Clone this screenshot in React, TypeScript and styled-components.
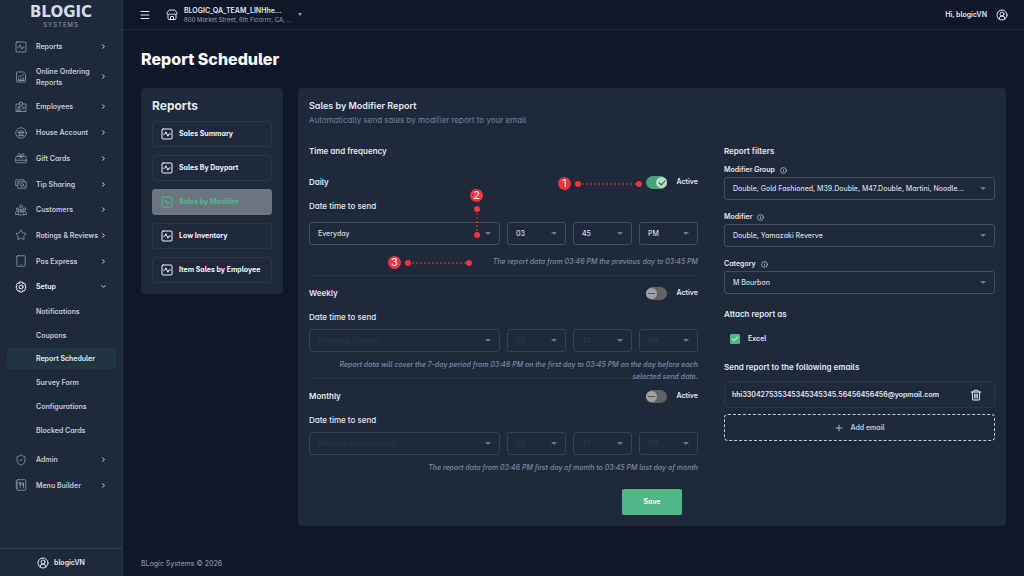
import React from "react";
import styled, { createGlobalStyle, css } from "styled-components";
import {
  Check,
  ChevronDown,
  ChevronRight,
  CircleUserRound,
  Info,
  Menu,
  Plus,
  ShieldCheck,
  Star,
  Store,
} from "lucide-react";

const c = {
  page: "#0f172a",
  panel: "#1e293b",
  line: "#2a3648",
  field: "#414e60",
  text: "#e2e8f0",
  soft: "#c3cad5",
  muted: "#73839b",
  green: "#52b788",
  red: "#fa3239",
};

const GlobalStyle = createGlobalStyle`
  *, *::before, *::after { box-sizing: border-box; }
  body {
    margin: 0;
    background: ${c.page};
    color: ${c.text};
    font-family: Inter, "Liberation Sans", sans-serif;
    font-size: 8px;
    line-height: 12px;
    font-weight: 500;
    font-feature-settings: "cv11", "cv05";
  }
  button, input, select { font: inherit; font-feature-settings: inherit; color: inherit; }
  button { cursor: pointer; }
  a { color: inherit; text-decoration: none; }
  h1, h2, h3, p, ul { margin: 0; padding: 0; }
  ul { list-style: none; }
  svg { display: block; flex: none; }
`;

/* ---------- icons ---------- */

const Icon = ({ size = 12, stroke = 1.5, children }: { size?: number; stroke?: number; children: React.ReactNode }) => (
  <svg
    width={size}
    height={size}
    viewBox="0 0 24 24"
    fill="none"
    stroke="currentColor"
    strokeWidth={stroke}
    strokeLinecap="round"
    strokeLinejoin="round"
    aria-hidden="true"
  >
    {children}
  </svg>
);

const PulseIcon = ({ stroke = 1.5 }: { stroke?: number }) => (
  <Icon stroke={stroke}>
    <rect x="2" y="2" width="20" height="20" rx="2" />
    <path d="M5.5 12.5h2l2.3-5 4 9 2.2-4.5h2.5" />
  </Icon>
);
const OrderReportIcon = () => (
  <Icon>
    <path d="M16 2H4.500A1.500 1.500 0 0 0 3 3.500v17A1.500 1.500 0 0 0 4.500 22h15a1.500 1.500 0 0 0 1.500-1.500V7z" />
    <path d="M6.500 12.500 10 9l2.500 2L17 7M7 19v-3M10.500 19v-4M14 19v-4M17.500 19v-6M7 19h10.500" />
  </Icon>
);
const BadgeIcon = () => (
  <Icon>
    <path d="M9 6H2v15h20V6h-7" />
    <rect x="9" y="2.500" width="6" height="6" rx="1" />
    <circle cx="8" cy="12" r="1.800" />
    <path d="M4.800 18c0-4 6.400-4 6.400 0zM14.500 12H19M14.500 15.500H19" />
  </Icon>
);
const BankIcon = () => (
  <Icon>
    <circle cx="12" cy="12" r="10.500" />
    <path d="M6 10.500 12 6.500l6 4zM6.500 17.500h11M8.500 11v6M12 11v6M15.500 11v6" />
  </Icon>
);
const GiftIcon = () => (
  <Icon>
    <rect x="1.500" y="9" width="21" height="12.500" rx="1.500" />
    <path d="M1.500 16.500h21M12 9C9 9 6 7.500 6 5.200 6 2 11 2 12 9c1-7 6-7 6-3.800C18 7.500 15 9 12 9zM12 9l-3 4M12 9l3 4" />
  </Icon>
);
const CashIcon = () => (
  <Icon>
    <path d="M5 15H1.500V3.500H18V7" />
    <rect x="5.500" y="7.500" width="17" height="13" rx="1" />
    <circle cx="14" cy="14" r="3" />
    <path d="M8.500 10.500v1M19.500 16.500v1" />
  </Icon>
);
const GroupIcon = () => (
  <Icon>
    <circle cx="12" cy="5" r="3" />
    <circle cx="5" cy="10" r="2.300" />
    <circle cx="19" cy="10" r="2.300" />
    <path d="M6.500 21v-4.500C6.500 9 17.500 9 17.500 16.500V21zM6 14c-3-.5-4.800 1-4.800 3.500V21h5.300M18 14c3-.5 4.800 1 4.800 3.500V21h-5.300" />
    <circle cx="12" cy="15" r="2" />
  </Icon>
);
const TabletIcon = () => (
  <Icon>
    <rect x="3.500" y="1.500" width="17" height="21" rx="2" />
    <path d="M11.500 19h1" />
  </Icon>
);
const GearIcon = () => (
  <Icon stroke={2}>
    <path d="M9.500 2h5l.8 2.700 2.700-.7 3 3.500-1.300 2.500 2.300 1.500v1.500l-2.300 1.500L21 17l-3 3-2.700-.7-.8 2.700h-5l-.8-2.700L6 20l-3-3 1.300-2.500L2 13v-1.500L4.300 10 3 7l3-3 2.700.7z" />
    <circle cx="12" cy="12" r="4" />
  </Icon>
);
const MenuBookIcon = () => (
  <Icon>
    <rect x="3.500" y="1.500" width="18" height="21" rx="2" />
    <path d="M2 6h3M2 10h3M2 14h3M2 18h3M8.500 7v3c0 2.500 4 2.500 4 0V7M10.500 7v11M17 18V7c-2 1-2.500 4-1.500 6H17" />
  </Icon>
);
const TrashIcon = () => (
  <Icon stroke={2}>
    <path d="M2.500 6h19M8 6V2.500h8V6M4.500 6l1 16h13l1-16M9.500 10v8M12 10v8M14.500 10v8" />
  </Icon>
);

/* ---------- shell ---------- */

const Shell = styled.div`
  display: flex;
  min-height: 100vh;
`;

const Sidebar = styled.aside`
  display: flex;
  flex-direction: column;
  flex: 0 0 123px;
  min-width: 0;
  background: ${c.panel};
  border-right: 1px solid ${c.line};
`;

const Brand = styled.div`
  display: flex;
  flex-direction: column;
  align-items: center;
  height: 34px;
  padding-top: 4px;
  color: #d5dae1;
`;
const BrandName = styled.span`
  font: bold 15px/17px "DejaVu Sans", sans-serif;
`;
const BrandSub = styled.span`
  font-size: 6px;
  line-height: 8px;
  font-weight: 400;
  letter-spacing: 1px;
  color: #94a0b0;
`;

const Nav = styled.nav`
  display: flex;
  flex: 1;
  padding-bottom: 50px;
`;
const NavList = styled.ul`
  display: flex;
  flex: 1;
  flex-direction: column;
  justify-content: space-between;
  min-width: 0;
`;
const NavItem = styled.li<{ $spaced?: boolean }>`
  padding: 0 6px 0 7px;
  margin-top: ${(p) => (p.$spaced ? 5 : 0)}px;
`;
const NavLink = styled.a<{ $active?: boolean }>`
  display: flex;
  align-items: center;
  gap: 9px;
  min-height: 25px;
  padding: 6px 9px 6px 8px;
  color: ${(p) => (p.$active ? "#f1f5f9" : c.soft)};
  font-size: 7px;
  line-height: 11px;
  font-weight: 600;
  & > svg { color: ${(p) => (p.$active ? "#f1f5f9" : "#98a2b1")}; }
  & > svg:last-child { margin-left: -9px; color: #e2e8f0; }
`;
const NavLabel = styled.span`
  flex: 1;
  white-space: pre;
`;
const SubLink = styled.a<{ $active?: boolean }>`
  display: block;
  margin: 1px 0;
  padding: 5px 0 5px 29px;
  border-radius: 3px;
  background: ${(p) => (p.$active ? "#203540" : "transparent")};
  color: ${(p) => (p.$active ? "#e8edf3" : c.soft)};
  font-size: 7px;
  line-height: 11px;
  font-weight: 600;
  white-space: nowrap;
`;
const SidebarUser = styled.div`
  display: flex;
  align-items: center;
  justify-content: center;
  gap: 5px;
  height: 28px;
  border-top: 1px solid #344154;
  font-size: 7px;
  font-weight: 600;
`;

const Main = styled.div`
  display: flex;
  flex: 1;
  flex-direction: column;
  min-width: 0;
`;
const TopBar = styled.header`
  display: flex;
  align-items: center;
  height: 30px;
  padding: 0 16px;
  border-bottom: 1px solid ${c.panel};
`;
const IconButton = styled.button`
  display: flex;
  padding: 0;
  border: 0;
  background: none;
`;
const StoreButton = styled.button`
  display: flex;
  align-items: center;
  gap: 6px;
  margin-left: 15px;
  padding: 0;
  border: 0;
  background: none;
  text-align: left;
`;
const StoreText = styled.span`
  display: flex;
  flex-direction: column;
  line-height: 9px;
  white-space: nowrap;
`;
const StoreAddress = styled.span`
  color: #94a1b5;
  font-size: 6px;
  font-weight: 400;
`;
const StoreName = styled.span`
  font-size: 7px;
  font-weight: 600;
`;
const Caret = styled.span`
  border: 2px solid transparent;
  border-top: 3px solid #8b97a8;
  border-bottom: 0;
`;
const UserButton = styled.button`
  display: flex;
  align-items: center;
  gap: 9px;
  margin-left: auto;
  padding: 0;
  border: 0;
  background: none;
  font-weight: 600;
  font-size: 7px;
`;

const Content = styled.main`
  flex: 1;
  padding: 18px;
`;
const PageTitle = styled.h1`
  font-size: 16px;
  line-height: 22px;
  font-weight: 800;
  color: #fff;
`;
const Columns = styled.div`
  display: grid;
  grid-template-columns: 142px minmax(0, 1fr);
  align-items: start;
  gap: 15px;
  margin-top: 18px;
`;
const Card = styled.section`
  padding: 11px;
  border-radius: 4px;
  background: ${c.panel};
`;
const Footer = styled.footer`
  padding: 6px 18px;
  color: #8492a8;
  font-size: 7px;
`;

/* ---------- report list ---------- */

const ListTitle = styled.h2`
  font-size: 12px;
  line-height: 14px;
  font-weight: 700;
`;
const ReportList = styled.ul`
  display: flex;
  flex-direction: column;
  gap: 8px;
  margin-top: 8px;
`;
const ReportButton = styled.button<{ $active?: boolean }>`
  display: flex;
  align-items: center;
  gap: 6px;
  width: 100%;
  height: 26px;
  padding: 0 8px;
  border: 1px solid ${(p) => (p.$active ? "#6b757f" : c.line)};
  border-radius: 3px;
  background: ${(p) => (p.$active ? "#6b757f" : "transparent")};
  color: ${(p) => (p.$active ? c.green : "#f1f5f9")};
  font-size: 7px;
  font-weight: 700;
  white-space: nowrap;
`;

/* ---------- form ---------- */

const CardTitle = styled.h2`
  font-size: 9px;
  line-height: 14px;
  font-weight: 600;
`;
const CardNote = styled.p`
  line-height: 14px;
  font-weight: 400;
  color: ${c.muted};
`;
const FormGrid = styled.form`
  display: grid;
  grid-template-columns: minmax(0, 389fr) minmax(0, 271fr);
  gap: 26px;
  margin-top: 17px;
`;
const SectionTitle = styled.h3`
  font-size: 8px;
  line-height: 14px;
  font-weight: 600;
`;
const Schedule = styled.section<{ $divided?: boolean }>`
  position: relative;
  padding-top: 17px;
  ${(p) =>
    p.$divided &&
    css`
      padding-top: 10px;
      border-top: 1px solid #263547;
    `}
`;
const ScheduleHead = styled.div`
  display: flex;
  align-items: center;
  justify-content: space-between;
  height: 14px;
`;
const SwitchLabel = styled.label`
  display: flex;
  align-items: center;
  gap: 10px;
  font-size: 7px;
  font-weight: 600;
`;
const Switch = styled.input`
  position: relative;
  appearance: none;
  width: 21px;
  height: 13px;
  margin: 0;
  border-radius: 7px;
  background: #626262;
  &::before {
    content: "";
    position: absolute;
    top: 1px;
    left: 0;
    width: 11px;
    height: 11px;
    border-radius: 50%;
    background: #a0a0a0;
  }
  &::after {
    content: "";
    position: absolute;
    top: 6px;
    left: 2px;
    width: 7px;
    height: 1px;
    background: #555;
  }
  &:checked { background: #48a276; }
  &:checked::before { left: 10px; background: #b6dcc8; }
  &:checked::after {
    top: 3px;
    left: 14px;
    width: 4px;
    height: 6px;
    background: none;
    border: solid #26493c;
    border-width: 0 1px 1px 0;
    transform: rotate(42deg);
  }
`;
const Caption = styled.p`
  margin-top: 11px;
`;
const TimeRow = styled.div<{ $roomy?: boolean }>`
  display: grid;
  grid-template-columns: minmax(0, 191fr) repeat(3, minmax(0, 59fr));
  gap: 7px;
  margin: ${(p) => (p.$roomy ? "10px 0 11px" : "6px 0 7px")};
`;
const SelectWrap = styled.span`
  position: relative;
  display: block;
  &::after {
    content: "";
    position: absolute;
    top: 10px;
    right: 9px;
    border: 3px solid transparent;
    border-top-color: #6c7888;
    border-bottom: 0;
    pointer-events: none;
  }
`;
const Select = styled.select`
  appearance: none;
  display: block;
  width: 100%;
  height: 23px;
  padding: 0 18px 0 8px;
  border: 1px solid ${c.field};
  border-radius: 3px;
  background: transparent;
  color: #d5dbe4;
  font-size: 7px;
  font-weight: 500;
  opacity: 1;
  text-overflow: ellipsis;
  &:disabled { border-color: #364356; color: #2b3849; opacity: 1; }
`;
const Hint = styled.p`
  position: relative;
  z-index: 1;
  height: 19px;
  padding-left: 20px;
  color: #7b8ba3;
  font-size: 7px;
  font-style: italic;
  text-align: right;
`;
const SaveButton = styled.button`
  display: block;
  width: 60px;
  height: 26px;
  margin: 8px 16px 0 auto;
  border: 0;
  border-radius: 2px;
  background: ${c.green};
  color: #fff;
  font-size: 7px;
  font-weight: 600;
`;

const Field = styled.div`
  & + & { margin-top: 12px; }
`;
const FieldLabel = styled.label`
  display: flex;
  align-items: center;
  gap: 5px;
  margin-bottom: 2px;
  font-size: 7px;
  line-height: 10px;
  font-weight: 600;
`;
const FieldList = styled.div`
  margin: 7px 0 13px;
`;
const CheckLabel = styled.label`
  display: flex;
  align-items: center;
  gap: 8px;
  margin: 12px 6px 15px;
  font-size: 7px;
  font-weight: 600;
`;
const CheckBox = styled.span`
  display: grid;
  width: 10px;
  height: 10px;
  place-items: center;
  & > * { grid-area: 1 / 1; }
  & > svg { color: #fff; pointer-events: none; z-index: 1; }
`;
const CheckInput = styled.input`
  appearance: none;
  width: 10px;
  height: 10px;
  margin: 0;
  border: 1px solid ${c.green};
  border-radius: 1px;
  &:checked { background: ${c.green}; }
`;
const EmailRow = styled.div`
  display: flex;
  align-items: center;
  justify-content: space-between;
  height: 27px;
  margin-top: 7px;
  padding: 0 12px 0 7px;
  border: 1px solid ${c.line};
  border-radius: 4px;
  font-size: 7px;
  font-weight: 600;
`;
const AddButton = styled.button`
  display: flex;
  align-items: center;
  justify-content: center;
  gap: 6px;
  width: 100%;
  height: 27px;
  margin-top: 6px;
  border: 1px dashed #c3cad5;
  border-radius: 4px;
  background: none;
  font-size: 7px;
  font-weight: 600;
  color: ${c.soft};
`;

/* ---------- numbered callouts, floating over the form ---------- */

const Callout = styled.div<{ $vertical?: boolean; $top: number; $right: number }>`
  position: absolute;
  z-index: 2;
  top: ${(p) => p.$top}px;
  right: ${(p) => p.$right}px;
  display: flex;
  flex-direction: ${(p) => (p.$vertical ? "column" : "row")};
  align-items: center;
  gap: 4px;
  pointer-events: none;
`;
const CalloutNumber = styled.span`
  width: 13px;
  height: 13px;
  border-radius: 50%;
  background: ${c.red};
  color: #fff;
  font: 400 11px/13px Inter, sans-serif;
  text-align: center;
`;
const HLine = () => (
  <svg width="67" height="6" viewBox="0 0 67 6" stroke={c.red} fill={c.red}>
    <path d="M3 3h61" strokeDasharray="2 2" />
    <circle cx="3" cy="3" r="3" stroke="none" />
    <circle cx="64" cy="3" r="3" stroke="none" />
  </svg>
);
const VLine = () => (
  <svg width="6" height="32" viewBox="0 0 6 32" stroke={c.red} fill={c.red}>
    <path d="M3 3v26" strokeDasharray="2 2" />
    <circle cx="3" cy="3" r="3" stroke="none" />
    <circle cx="3" cy="29" r="3" stroke="none" />
  </svg>
);

/* ---------- data ---------- */

type Entry = { label: string; icon?: React.ReactNode; open?: boolean; active?: boolean; spaced?: boolean };

const NAV: Entry[] = [
  { label: "Reports", icon: <PulseIcon /> },
  { label: "Online Ordering\nReports", icon: <OrderReportIcon /> },
  { label: "Employees", icon: <BadgeIcon /> },
  { label: "House Account", icon: <BankIcon /> },
  { label: "Gift Cards", icon: <GiftIcon /> },
  { label: "Tip Sharing", icon: <CashIcon /> },
  { label: "Customers", icon: <GroupIcon /> },
  { label: "Ratings & Reviews", icon: <Star size={12} strokeWidth={1.5} /> },
  { label: "Pos Express", icon: <TabletIcon /> },
  { label: "Setup", icon: <GearIcon />, open: true },
  { label: "Notifications" },
  { label: "Coupons" },
  { label: "Report Scheduler", active: true },
  { label: "Survey Form" },
  { label: "Configurations" },
  { label: "Blocked Cards" },
  { label: "Admin", icon: <ShieldCheck size={12} strokeWidth={1.5} />, spaced: true },
  { label: "Menu Builder", icon: <MenuBookIcon /> },
];

const REPORTS = ["Sales Summary", "Sales By Daypart", "Sales by Modifier", "Low Inventory", "Item Sales by Employee"];

const FILTERS = [
  { id: "group", label: "Modifier Group", value: "Double, Gold Fashioned, M39.Double, M47.Double, Martini, Noodle..." },
  { id: "modifier", label: "Modifier", value: "Double, Yamazaki Reverve" },
  { id: "category", label: "Category", value: "M Bourbon" },
];

const SCHEDULES = [
  { name: "Daily", day: "Everyday", on: true, hint: "The report data from 03:46 PM the previous day to 03:45 PM" },
  {
    name: "Weekly",
    day: "Saturday, Sunday",
    on: false,
    hint: "Report data will cover the 7-day period from 03:46 PM on the first day to 03:45 PM on the day before each selected send date.",
  },
  {
    name: "Monthly",
    day: "First day of next month",
    on: false,
    hint: "The report data from 03:46 PM first day of month to 03:45 PM last day of month",
  },
];

const Picker = ({ value, ...rest }: { value: string; id?: string; disabled?: boolean; "aria-label"?: string }) => (
  <SelectWrap>
    <Select defaultValue={value} {...rest}>
      <option>{value}</option>
    </Select>
  </SelectWrap>
);

export default function App() {
  return (
    <>
      <GlobalStyle />
      <Shell>
        <Sidebar>
          <Brand>
            <BrandName>BLOGIC</BrandName>
            <BrandSub>SYSTEMS</BrandSub>
          </Brand>
          <Nav>
            <NavList>
              {NAV.map((n) => (
                <NavItem key={n.label} $spaced={n.spaced}>
                  {n.icon ? (
                    <NavLink href="#" $active={n.open}>
                      {n.icon}
                      <NavLabel>{n.label}</NavLabel>
                      {n.open ? <ChevronDown size={7} strokeWidth={3} /> : <ChevronRight size={7} strokeWidth={3} />}
                    </NavLink>
                  ) : (
                    <SubLink href="#" $active={n.active}>
                      {n.label}
                    </SubLink>
                  )}
                </NavItem>
              ))}
            </NavList>
          </Nav>
          <SidebarUser>
            <CircleUserRound size={12} />
            blogicVN
          </SidebarUser>
        </Sidebar>

        <Main>
          <TopBar>
            <IconButton aria-label="Toggle menu">
              <Menu size={12} />
            </IconButton>
            <StoreButton>
              <Store size={12} />
              <StoreText>
                <StoreName>BLOGIC_QA_TEAM_LINHhe...</StoreName>
                <StoreAddress>800 Market Street, 6th Floorrrr, CA, ...</StoreAddress>
              </StoreText>
              <Caret />
            </StoreButton>
            <UserButton>
              Hi, blogicVN
              <CircleUserRound size={12} />
            </UserButton>
          </TopBar>

          <Content>
            <PageTitle>Report Scheduler</PageTitle>
            <Columns>
              <Card>
                <ListTitle>Reports</ListTitle>
                <ReportList>
                  {REPORTS.map((r) => (
                    <li key={r}>
                      <ReportButton $active={r === "Sales by Modifier"}>
                        <PulseIcon stroke={2} />
                        {r}
                      </ReportButton>
                    </li>
                  ))}
                </ReportList>
              </Card>

              <Card>
                <CardTitle>Sales by Modifier Report</CardTitle>
                <CardNote>Automatically send sales by modifier report to your email</CardNote>
                <FormGrid onSubmit={(e) => e.preventDefault()}>
                  <div>
                    <SectionTitle>Time and frequency</SectionTitle>
                    <div>
                      {SCHEDULES.map((s, i) => (
                        <Schedule key={s.name} $divided={i > 0}>
                          <ScheduleHead>
                            <SectionTitle>{s.name}</SectionTitle>
                            <SwitchLabel>
                              <Switch type="checkbox" role="switch" defaultChecked={s.on} />
                              Active
                            </SwitchLabel>
                          </ScheduleHead>
                          <Caption>Date time to send</Caption>
                          <TimeRow $roomy={s.on}>
                            <Picker value={s.day} disabled={!s.on} aria-label={`${s.name} day`} />
                            <Picker value="03" disabled={!s.on} aria-label={`${s.name} hour`} />
                            <Picker value="45" disabled={!s.on} aria-label={`${s.name} minute`} />
                            <Picker value="PM" disabled={!s.on} aria-label={`${s.name} period`} />
                          </TimeRow>
                          <Hint>{s.hint}</Hint>
                          {i === 0 && (
                            <>
                              <Callout $top={19} $right={56}>
                                <CalloutNumber>1</CalloutNumber>
                                <HLine />
                              </Callout>
                              <Callout $vertical $top={31} $right={215}>
                                <CalloutNumber>2</CalloutNumber>
                                <VLine />
                              </Callout>
                              <Callout $top={98} $right={226}>
                                <CalloutNumber>3</CalloutNumber>
                                <HLine />
                              </Callout>
                            </>
                          )}
                        </Schedule>
                      ))}
                    </div>
                    <SaveButton type="submit">Save</SaveButton>
                  </div>

                  <div>
                    <SectionTitle>Report filters</SectionTitle>
                    <FieldList>
                      {FILTERS.map((f) => (
                        <Field key={f.id}>
                          <FieldLabel htmlFor={f.id}>
                            {f.label}
                            <Info size={7} />
                          </FieldLabel>
                          <Picker id={f.id} value={f.value} />
                        </Field>
                      ))}
                    </FieldList>
                    <SectionTitle>Attach report as</SectionTitle>
                    <CheckLabel>
                      <CheckBox>
                        <CheckInput type="checkbox" defaultChecked />
                        <Check size={8} strokeWidth={3} />
                      </CheckBox>
                      Excel
                    </CheckLabel>
                    <SectionTitle>Send report to the following emails</SectionTitle>
                    <EmailRow>
                      hhi330427535345345345345.56456456456@yopmail.com
                      <IconButton type="button" aria-label="Delete email">
                        <TrashIcon />
                      </IconButton>
                    </EmailRow>
                    <AddButton type="button">
                      <Plus size={10} />
                      Add email
                    </AddButton>
                  </div>
                </FormGrid>
              </Card>
            </Columns>
          </Content>
          <Footer>BLogic Systems © 2026</Footer>
        </Main>
      </Shell>
    </>
  );
}
